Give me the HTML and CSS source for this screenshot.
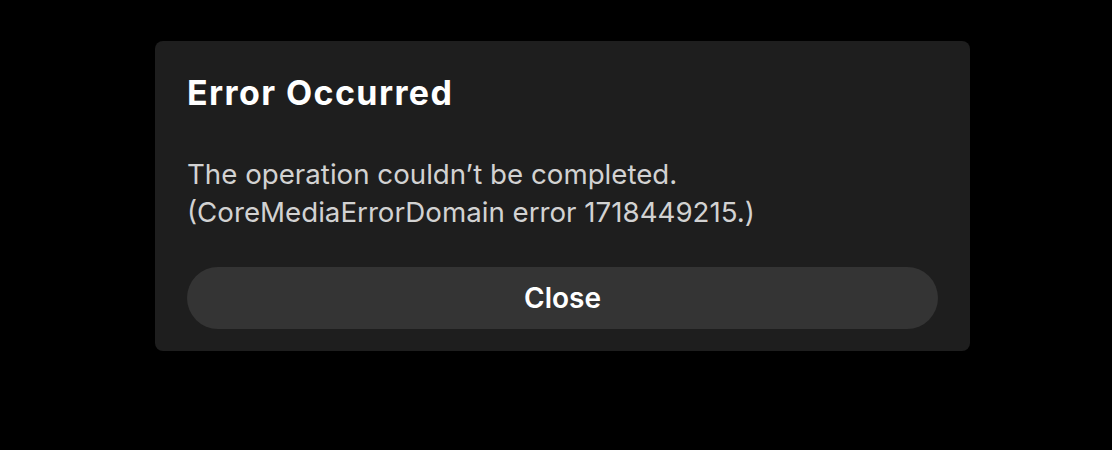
FILE: index.html
```html
<!DOCTYPE html>
<html>
<head>
<meta charset="utf-8">
<link rel="stylesheet" href="styles.css">
</head>
<body>
<div class="page">
  <div class="dialog">
    <h1 class="title">Error Occurred</h1>
    <p class="message">The operation couldn’t be completed.<br>(CoreMediaErrorDomain error 1718449215.)</p>
    <button class="close">Close</button>
  </div>
</div>
</body>
</html>
```
FILE: styles.css
```css
html, body {
  margin: 0;
  padding: 0;
  background: #000;
}
.page {
  width: 1112px;
  height: 450px;
  display: flex;
  justify-content: flex-start;
  align-items: flex-start;
  padding: 41px 0 0 155px;
  box-sizing: border-box;
}
.dialog {
  width: 815px;
  box-sizing: border-box;
  background: #1e1e1e;
  border-radius: 8px;
  padding: 28px 32px 22px 32px;
  display: flex;
  flex-direction: column;
}
.title {
  margin: 0;
  font-family: "Inter", "Lato", sans-serif;
  font-weight: 700;
  font-size: 34px;
  letter-spacing: 1.4px;
  line-height: 48px;
  color: #fff;
}
.message {
  margin: 38px 0 0 0;
  font-family: "Inter", "Liberation Sans", sans-serif;
  font-size: 27.7px;
  line-height: 38px;
  color: #d2d2d2;
}
.close {
  margin-top: 36px;
  height: 62px;
  width: 100%;
  border: none;
  border-radius: 31px;
  background: #343434;
  color: #fff;
  font-family: "Inter", "Liberation Sans", sans-serif;
  font-weight: 600;
  font-size: 28px;
}
```
